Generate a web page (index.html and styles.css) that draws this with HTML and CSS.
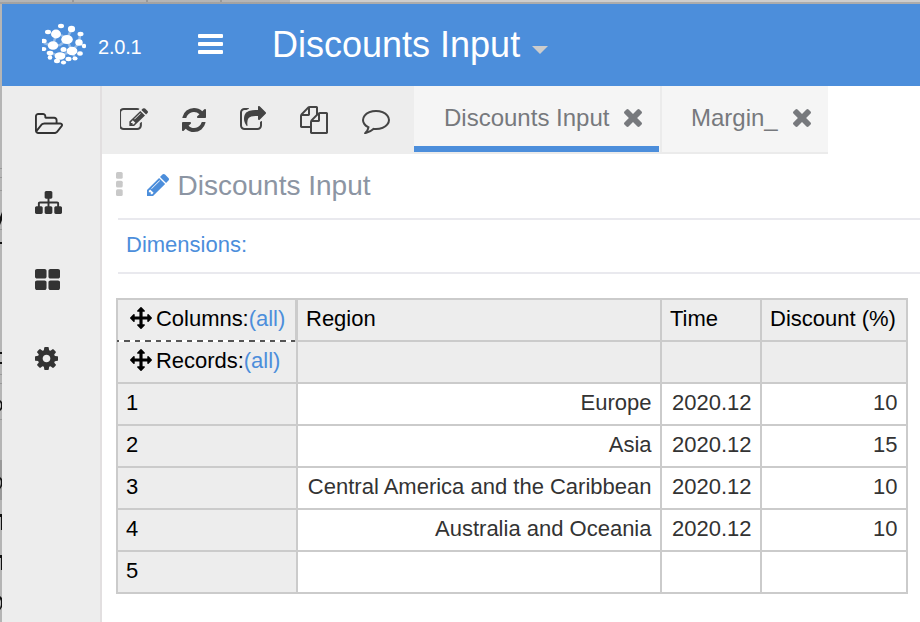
FILE: index.html
```html
<!DOCTYPE html>
<html lang="en">
<head>
<meta charset="utf-8">
<title>Discounts Input</title>
<link rel="stylesheet" href="styles.css">
</head>
<body>
<div class="window">
  <div class="window-top"></div>
  <svg class="window-left" width="2" height="618" viewBox="0 4 2 618">
    <path fill="#b5b5b5" d="M0 4h2v618H0z"/>
    <path fill="#999" d="M0 168h2v1H0zM0 177h2v1H0zM0 190h2v1H0zM0 229h2v1H0zM0 374h2v1H0zM0 383h2v1H0zM0 419h2v1H0zM0 460h2v40H0z"/>
    <path fill="#111" d="M0 217l2-5v8l-2 5zM0 242h2v2H0zM0 352h2v2H0zM0 362h2v2H0zM0 400l2 2v7l-2 2v-2l1-2v-3l-1-2zM0 477l2 2v7l-2 3v-2l1-3v-3l-1-2zM0 514h2v16H1v-13H0zM0 555h2v15H1v-12H0zM0 596l2 2v9l-2 3v-2l1-3v-4l-1-2z"/>
  </svg>
  <header class="header">
    <svg class="logo" width="44" height="42" viewBox="42 23 44 42" fill="#fff">
      <ellipse cx="61" cy="26" rx="3" ry="2.200"/><ellipse cx="71.5" cy="29" rx="3.600" ry="3.200"/>
      <ellipse cx="48" cy="32" rx="3" ry="2.200"/><ellipse cx="56" cy="34" rx="5" ry="4.400"/>
      <ellipse cx="80.500" cy="34" rx="3" ry="2.200"/><ellipse cx="67" cy="39.500" rx="5.800" ry="4.500"/>
      <ellipse cx="43.500" cy="41" rx="3.200" ry="2.200"/><ellipse cx="53" cy="45.500" rx="5.200" ry="4.300"/>
      <ellipse cx="79" cy="42.500" rx="3.700" ry="3.200"/><ellipse cx="84" cy="46" rx="2.200" ry="2.200"/>
      <ellipse cx="43.500" cy="49" rx="2.800" ry="2"/><ellipse cx="63.500" cy="49.500" rx="3" ry="2.500"/>
      <ellipse cx="72" cy="51" rx="5.400" ry="4.200"/><ellipse cx="50" cy="53" rx="3.300" ry="2.300"/>
      <ellipse cx="80" cy="53.500" rx="2.800" ry="2.200"/><ellipse cx="60" cy="56" rx="5.400" ry="3.800"/>
      <ellipse cx="50" cy="57.500" rx="2.300" ry="2.300"/><ellipse cx="68.500" cy="59" rx="3" ry="2.200"/>
      <ellipse cx="75" cy="58.500" rx="2.600" ry="2"/><ellipse cx="57" cy="61" rx="3" ry="2.200"/>
      <ellipse cx="63.500" cy="62.500" rx="2.600" ry="2"/>
      <path stroke="#fff" stroke-opacity=".4" stroke-width="2.5" fill="none" d="M71 30l-4 9-6-4M53 45l3-10M67 40l-7 5-7 1-9-3M67 40l5 11 7-8 5 3M72 51l-12 5-10-3v4M79 43l1-8M60 56l-4 5M72 52l3 6"/>
    </svg>
    <span class="version">2.0.1</span>
    <svg class="bars" width="25" height="20" fill="#fff"><rect width="25" height="4" rx="1"/><rect y="8" width="25" height="4" rx="1"/><rect y="16" width="25" height="4" rx="1"/></svg>
    <h1 class="title">Discounts Input</h1>
    <svg class="caret" width="16" height="8"><path fill="#ccc" d="M0 0h16L8 8z"/></svg>
  </header>
  <div class="body">
    <nav class="sidebar">
      <svg class="s-folder" viewBox="64 128 1909 1408" preserveAspectRatio="none"><path d="M1845 931q0-35-53-35h-1088q-40 0-85.500 21.500t-71.500 52.500l-294 363q-18 24-18 40 0 35 53 35h1088q40 0 86-22t71-53l294-363q18-22 18-39zm-1141-163h768v-160q0-40-28-68t-68-28h-576q-40 0-68-28t-28-68v-64q0-40-28-68t-68-28h-320q-40 0-68 28t-28 68v853l256-315q44-53 116-87.500t140-34.500zm1269 163q0 62-46 120l-295 363q-43 53-116 87.500t-140 34.500h-1088q-92 0-158-66t-66-158v-960q0-92 66-158t158-66h320q92 0 158 66t66 158v32h544q92 0 158 66t66 158v160h192q54 0 99 24.500t67 70.500q15 32 15 68z"/></svg>
      <svg class="s-sitemap" viewBox="0 128 1792 1536" preserveAspectRatio="none"><path d="M1792 1248v320q0 40-28 68t-68 28h-320q-40 0-68-28t-28-68v-320q0-40 28-68t68-28h96v-192h-512v192h96q40 0 68 28t28 68v320q0 40-28 68t-68 28h-320q-40 0-68-28t-28-68v-320q0-40 28-68t68-28h96v-192h-512v192h96q40 0 68 28t28 68v320q0 40-28 68t-68 28h-320q-40 0-68-28t-28-68v-320q0-40 28-68t68-28h96v-192q0-52 38-90t90-38h512v-192h-96q-40 0-68-28t-28-68v-320q0-40 28-68t68-28h320q40 0 68 28t28 68v320q0 40-28 68t-68 28h-96v192h512q52 0 90 38t38 90v192h96q40 0 68 28t28 68z"/></svg>
      <svg class="s-grid" viewBox="64 128 1664 1408" preserveAspectRatio="none"><path d="M832 1024v384q0 52-38 90t-90 38h-512q-52 0-90-38t-38-90v-384q0-52 38-90t90-38h512q52 0 90 38t38 90zm0-768v384q0 52-38 90t-90 38h-512q-52 0-90-38t-38-90v-384q0-52 38-90t90-38h512q52 0 90 38t38 90zm896 768v384q0 52-38 90t-90 38h-512q-52 0-90-38t-38-90v-384q0-52 38-90t90-38h512q52 0 90 38t38 90zm0-768v384q0 52-38 90t-90 38h-512q-52 0-90-38t-38-90v-384q0-52 38-90t90-38h512q52 0 90 38t38 90z"/></svg>
      <svg class="s-cog" viewBox="128 128 1536 1536" preserveAspectRatio="none"><path d="M1152 896q0-106-75-181t-181-75-181 75-75 181 75 181 181 75 181-75 75-181zm512-109v222q0 12-8 23t-20 13l-185 28q-19 54-39 91 35 50 107 138 10 12 10 25t-9 23q-27 37-99 108t-94 71q-12 0-26-9l-138-108q-44 23-91 38-16 136-29 186-7 28-36 28h-222q-14 0-24.500-8.500t-11.500-21.500l-28-184q-49-16-90-37l-141 107q-10 9-25 9-14 0-25-11-126-114-165-168-7-10-7-23 0-12 8-23 15-21 51-66.500t54-70.500q-27-50-41-99l-183-27q-13-2-21-12.500t-8-23.500v-222q0-12 8-23t19-13l186-28q14-46 39-92-40-57-107-138-10-12-10-24 0-10 9-23 26-36 98.500-107.500t94.500-71.500q13 0 26 10l138 107q44-23 91-38 16-136 29-186 7-28 36-28h222q14 0 24.500 8.500t11.500 21.500l28 184q49 16 90 37l142-107q9-9 24-9 13 0 25 10 129 119 165 170 7 8 7 22 0 12-8 23-15 21-51 66.500t-54 70.500q26 50 41 98l183 28q13 2 21 12.500t8 23.500z"/></svg>
    </nav>
    <main class="main">
      <div class="bar">
        <div class="toolbar">
          <svg class="t-edit" viewBox="64 128 1720 1408" preserveAspectRatio="none"><path d="M888 1184l116-116-152-152-116 116v56h96v96h56zm440-720q-16-16-33 1l-350 350q-17 17-1 33t33-1l350-350q17-17 1-33zm80 594v190q0 119-84.500 203.500t-203.500 84.500h-832q-119 0-203.500-84.500t-84.500-203.500v-832q0-119 84.500-203.500t203.500-84.500h832q63 0 117 25 15 7 18 23 3 17-9 29l-49 49q-14 14-32 8-23-6-45-6h-832q-66 0-113 47t-47 113v832q0 66 47 113t113 47h832q66 0 113-47t47-113v-126q0-13 9-22l64-64q15-15 35-7t20 29zm-96-738l288 288-672 672h-288v-288zm444 132l-92 92-288-288 92-92q28-28 68-28t68 28l152 152q28 28 28 68t-28 68z"/></svg>
          <svg class="t-refresh" viewBox="128 128 1536 1536" preserveAspectRatio="none"><path d="M1639 1056q0 5-1 7-64 268-268 434.500t-478 166.500q-146 0-282.500-55t-243.500-157l-129 129q-19 19-45 19t-45-19-19-45v-448q0-26 19-45t45-19h448q26 0 45 19t19 45-19 45l-137 137q71 66 161 102t187 36q134 0 250-65t186-179q11-17 53-117 8-23 30-23h192q13 0 22.500 9.500t9.500 22.500zm25-800v448q0 26-19 45t-45 19h-448q-26 0-45-19t-19-45 19-45l138-138q-148-137-349-137-134 0-250 65t-186 179q-11 17-53 117-8 23-30 23h-199q-13 0-22.500-9.500t-9.500-22.500v-7q65-268 270-434.500t480-166.500q146 0 284 55.500t245 156.500l130-129q19-19 45-19t45 19 19 45z"/></svg>
          <svg class="t-share" viewBox="64 0 1664 1536" preserveAspectRatio="none"><path d="M1472 989v259q0 119-84.500 203.500t-203.500 84.500h-832q-119 0-203.500-84.500t-84.500-203.500v-832q0-119 84.500-203.500t203.500-84.500h255q13 0 22.500 9.500t9.500 22.500q0 27-26 32-77 26-133 60-10 4-16 4h-112q-66 0-113 47t-47 113v832q0 66 47 113t113 47h832q66 0 113-47t47-113v-214q0-19 18-29 28-13 54-37 16-16 35-8 21 9 21 29zm237-496l-384 384q-18 19-45 19-12 0-25-5-39-17-39-59v-192h-160q-323 0-438 131-119 137-74 473 3 23-20 34-8 2-12 2-16 0-26-13-10-14-21-31t-39.500-68.500-49.500-99.500-38.500-114-17.500-122q0-49 3.500-91t14-90 28-88 47-81.500 68.500-74 94.500-61.500 124.500-48.500 159.500-30.500 196.500-11h160v-192q0-42 39-59 13-5 25-5 26 0 45 19l384 384q19 19 19 45t-19 45z"/></svg>
          <svg class="t-files" viewBox="0 0 1792 1792" preserveAspectRatio="none"><path d="M1696 384q40 0 68 28t28 68v1216q0 40-28 68t-68 28h-960q-40 0-68-28t-28-68v-288h-544q-40 0-68-28t-28-68v-672q0-40 20-88t48-76l408-408q28-28 76-48t88-20h416q40 0 68 28t28 68v328q68-40 128-40h416zm-544 213l-299 299h299v-299zm-640-384l-299 299h299v-299zm196 647l316-316v-416h-384v416q0 40-28 68t-68 28h-416v640h512v-256q0-40 20-88t48-76zm956 804v-1152h-384v416q0 40-28 68t-68 28h-416v640h896z"/></svg>
          <svg class="t-comment" viewBox="0 256 1792 1536" preserveAspectRatio="none"><path d="M896 384q-204 0-381.500 69.500t-282 187.500-104.500 255q0 112 71.500 213.500t201.500 175.500l87 50-27 96q-24 91-70 172 152-63 275-171l43-38 57 6q69 8 130 8 204 0 381.500-69.500t282-187.500 104.500-255-104.500-255-282-187.500-381.500-69.500zm896 512q0 174-120 321.500t-326 233-450 85.500q-70 0-145-8-198 175-460 242-49 14-114 22h-5q-15 0-27-10.500t-16-27.500v-1q-3-4-.5-12t2-10 4.500-9.500l6-9 7-8.500 8-9q7-8 31-34.500t34.500-38 31-39.500 32.500-51 27-59 26-76q-157-89-247.500-220t-90.500-281q0-174 120-321.500t326-233 450-85.500 450 85.500 326 233 120 321.500z"/></svg>
        </div>
        <div class="tab tab-active"><span>Discounts Input</span><svg class="close" viewBox="302 366 1188 1188"><use href="#close"/></svg></div>
        <div class="tab"><span>Margin_</span><svg class="close" viewBox="302 366 1188 1188"><path id="close" d="M1490 1322q0 40-28 68l-136 136q-28 28-68 28t-68-28l-294-294-294 294q-28 28-68 28t-68-28l-136-136q-28-28-28-68t28-68l294-294-294-294q-28-28-28-68t28-68l136-136q28-28 68-28t68 28l294 294 294-294q28-28 68-28t68 28l136 136q28 28 28 68t-28 68l-294 294 294 294q28 28 28 68z"/></svg></div>
      </div>
      <div class="heading">
        <svg class="dots" width="7" height="24" fill="#c9c9c9"><rect width="6.700" height="6.700" rx="1.500"/><rect y="8.700" width="6.700" height="6.700" rx="1.500"/><rect y="17.300" width="6.700" height="6.700" rx="1.500"/></svg>
        <svg class="pencil" width="22" height="22" viewBox="128 149 1515 1515"><path d="M491 1536l91-91-235-235-91 91v107h128v128h107zm523-928q0-22-22-22-10 0-17 7l-542 542q-7 7-7 17 0 22 22 22 10 0 17-7l542-542q7-7 7-17zm-54-192l416 416-832 832h-416v-416zm683 96q0 53-37 90l-166 166-416-416 166-165q36-38 90-38 53 0 91 38l235 234q37 39 37 91z"/></svg>
        <h2>Discounts Input</h2>
      </div>
      <div class="dimensions">Dimensions:</div>
      <table class="sheet">
        <colgroup><col class="c-key"><col class="c-region"><col class="c-time"><col class="c-discount"></colgroup>
        <tr><th class="axis axis-cols"><div><svg class="move" viewBox="0 0 1792 1792"><path id="move" d="M1792 896q0 26-19 45l-256 256q-19 19-45 19t-45-19-19-45v-128h-384v384h128q26 0 45 19t19 45-19 45l-256 256q-19 19-45 19t-45-19l-256-256q-19-19-19-45t19-45 45-19h128v-384h-384v128q0 26-19 45t-45 19-45-19l-256-256q-19-19-19-45t19-45l256-256q19-19 45-19t45 19 19 45v128h384v-384h-128q-26 0-45-19t-19-45 19-45l256-256q19-19 45-19t45 19l256 256q19 19 19 45t-19 45-45 19h-128v384h384v-128q0-26 19-45t45-19 45 19l256 256q19 19 19 45z"/></svg>Columns:<a>(all)</a></div></th><th>Region</th><th>Time</th><th>Discount (%)</th></tr>
        <tr><th class="axis"><div><svg class="move" viewBox="0 0 1792 1792"><use href="#move"/></svg>Records:<a>(all)</a></div></th><th></th><th></th><th></th></tr>
        <tr><th>1</th><td>Europe</td><td>2020.12</td><td>10</td></tr>
        <tr><th>2</th><td>Asia</td><td>2020.12</td><td>15</td></tr>
        <tr><th>3</th><td>Central America and the Caribbean</td><td>2020.12</td><td>10</td></tr>
        <tr><th>4</th><td>Australia and Oceania</td><td>2020.12</td><td>10</td></tr>
        <tr><th>5</th><td></td><td></td><td></td></tr>
      </table>
    </main>
  </div>
</div>
</body>
</html>
```
FILE: styles.css
```css
* { box-sizing: border-box; }
body { margin: 0; background: #fff; font-family: "Liberation Sans", Arial, sans-serif; overflow: hidden; }
svg { display: block; flex: none; }
h1, h2 { margin: 0; font-weight: 400; white-space: nowrap; }

.window {
  width: 920px; height: 622px; overflow: hidden;
  display: grid; grid-template: 4px 82px 536px / 2px 918px;
}
.window-top {
  grid-column: 1 / 3;
  background:
    linear-gradient(transparent 2px, rgba(150, 150, 150, .6) 2px),
    repeating-linear-gradient(90deg, transparent 0 72px, #999 72px 74px) 0 0 / 290px 2px no-repeat,
    linear-gradient(90deg, #b5b5b5 290px, #cdcdcd 290px);
}
.window-left { grid-row: 2 / 4; grid-column: 1; }

.header { grid-column: 2; display: flex; background: #4c8edb; color: #fff; }
.logo { margin: 19px 0 0 40px; }
.version { margin: 32px 0 0 12px; width: 45px; font-size: 20px; line-height: 23px; letter-spacing: -.2px; }
.bars { margin: 30px 0 0 55px; }
.title { margin: 20px 0 0 49px; width: 247px; font-size: 36px; line-height: 41px; }
.caret { margin: 42px 0 0 13px; }

.body { grid-column: 2; display: flex; }
.sidebar {
  width: 100px; padding: 27px 0 0 33px; border-right: 2px solid #e2dfe0;
  background: #ededed; fill: #333;
}
.s-folder { width: 28px; height: 21px; }
.s-sitemap { width: 27px; height: 23px; margin-top: 57px; }
.s-grid { width: 25px; height: 21px; margin-top: 55px; }
.s-cog { width: 23px; height: 23px; margin-top: 57px; }

.main { flex: none; width: 818px; }
.bar { display: flex; height: 68px; }
.toolbar { display: flex; width: 312px; padding-left: 18px; background: #ededed; fill: #444; }
.t-edit { width: 28px; height: 22px; margin-top: 22px; }
.t-refresh { width: 24px; height: 24px; margin: 22px 0 0 34px; }
.t-share { width: 26px; height: 24px; margin: 20px 0 0 34px; }
.t-files { width: 28px; height: 28px; margin: 20px 0 0 34px; }
.t-comment { width: 28px; height: 24px; margin: 24px 0 0 34px; }
.tab {
  display: flex; width: 166px; padding: 18px 0 0 29px; background: #f5f5f5;
  border-bottom: 2px solid #ebebeb; color: #77797d; fill: #77797d;
  font-size: 24px; line-height: 28px;
}
.tab-active {
  width: 248px; padding-left: 30px; border-right: 2px solid #ebebeb;
  background: linear-gradient(#4c8edb, #4c8edb) 0 60px / 245px 6px no-repeat #f5f5f5;
}
.tab span { width: 102px; }
.tab-active span { width: 180px; white-space: nowrap; }
.close { width: 18px; height: 18px; margin-top: 5px; }

.heading {
  display: flex; height: 66px; margin-left: 16px;
  border-bottom: 2px solid #e9e9ee; color: #8c95a3;
}
.dots { margin: 18px 0 0 -2px; }
.pencil { margin: 20px 0 0 24px; fill: #4c8edb; }
.heading h2 { margin: 16px 0 0 8.500px; font-size: 28px; line-height: 32px; }
.dimensions {
  height: 54px; margin-left: 16px; padding: 12px 0 0 8px;
  border-bottom: 2px solid #e9e9ee; color: #4c8edb; font-size: 22px; line-height: 25px;
}

.sheet {
  width: 792px; margin: 24px 0 0 14px; table-layout: fixed;
  border-spacing: 2px; background: #cbcbcb; font-size: 22px; line-height: 25px;
}
.c-key { width: 178px; }
.c-region { width: 362px; }
.c-time { width: 98px; }
.c-discount { width: 144px; }
.sheet th, .sheet td { height: 40px; padding: 0 8px 4px; white-space: nowrap; }
.sheet td { padding-right: 8.500px; }
.sheet th { background: #ededed; color: #000; font-weight: 400; text-align: left; }
.sheet td { background: #fff; color: #333; text-align: right; }
.sheet .axis { padding: 0 0 4px 12px; letter-spacing: -.03px; }
.axis div { display: flex; align-items: center; }
.move { width: 22px; height: 22px; margin-right: 4px; }
.axis a { color: #4c8edb; }
.sheet .axis-cols { position: relative; border-right: 1px solid #cbcbcb; }
.axis-cols::after {
  content: ""; position: absolute; left: -1px; right: 0; bottom: -2px; height: 2px;
  background: repeating-linear-gradient(90deg, #555 0 5.500px, #fff 5.500px 10.400px) -3px 0;
}
```
